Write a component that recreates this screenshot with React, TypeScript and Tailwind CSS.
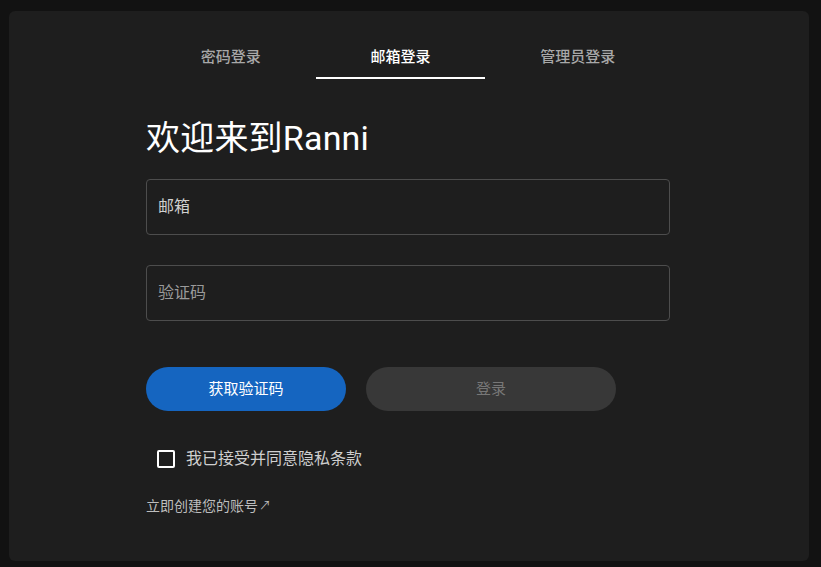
import React, { useState } from 'react';

const tabs = ['密码登录', '邮箱登录', '管理员登录'];

export default function App() {
  const [active, setActive] = useState(1);
  const [agreed, setAgreed] = useState(false);

  return (
    <div
      className="min-h-[567px] bg-[#121212] pl-[9px] pr-[12px] pt-[11px] pb-[6px]"
      style={{ fontFamily: 'Roboto, "Noto Sans CJK SC", sans-serif' }}
    >
      <div className="h-[550px] rounded-md bg-[#1e1e1e]">
        <div className="ml-[137px] w-[524px] pt-[20px]">
          {/* tabs */}
          <div className="flex">
            {tabs.map((t, i) => (
              <button
                key={t}
                onClick={() => setActive(i)}
                className={`flex h-[48px] flex-auto items-center justify-center border-b-2 pt-[6px] text-[15px] font-medium ${
                  active === i ? 'border-white text-white' : 'border-transparent text-[#a8a8a8]'
                }`}
              >
                {t}
              </button>
            ))}
          </div>

          <h1 className="mt-[38px] text-[34px] leading-[42px] tracking-[0.2px] text-white">欢迎来到Ranni</h1>

          <div className="mt-[20px] flex h-[56px] items-center rounded border border-[#4d4d4d] px-[11px] text-[16px] text-[#d0d0d0]">
            邮箱
          </div>
          <div className="mt-[30px] flex h-[56px] items-center rounded border border-[#4d4d4d] px-[11px] text-[16px] text-[#9a9a9a]">
            验证码
          </div>

          <div className="mt-[46px] flex gap-[20px]">
            <button className="h-[44px] w-[200px] rounded-full bg-[#1565c0] text-[15px] text-white">
              获取验证码
            </button>
            <button className="h-[44px] w-[250px] rounded-full bg-[#383838] text-[15px] text-[#777]">
              登录
            </button>
          </div>

          <label className="mt-[27px] flex h-[42px] cursor-pointer items-center">
            <span className="flex h-[42px] w-[40px] items-center justify-center">
              <span
                onClick={() => setAgreed(!agreed)}
                className={`block h-[18px] w-[18px] rounded-[2px] border-2 border-white ${agreed ? 'bg-white' : ''}`}
              />
            </span>
            <span className="text-[16px] text-[#cfcfcf]">我已接受并同意隐私条款</span>
          </label>

          <a className="mt-[16px] flex items-center text-[14px] leading-[20px] text-[#bdbdbd]">
            立即创建您的账号<span className="ml-[1px] text-[12px]">↗</span>
          </a>
        </div>
      </div>
    </div>
  );
}
